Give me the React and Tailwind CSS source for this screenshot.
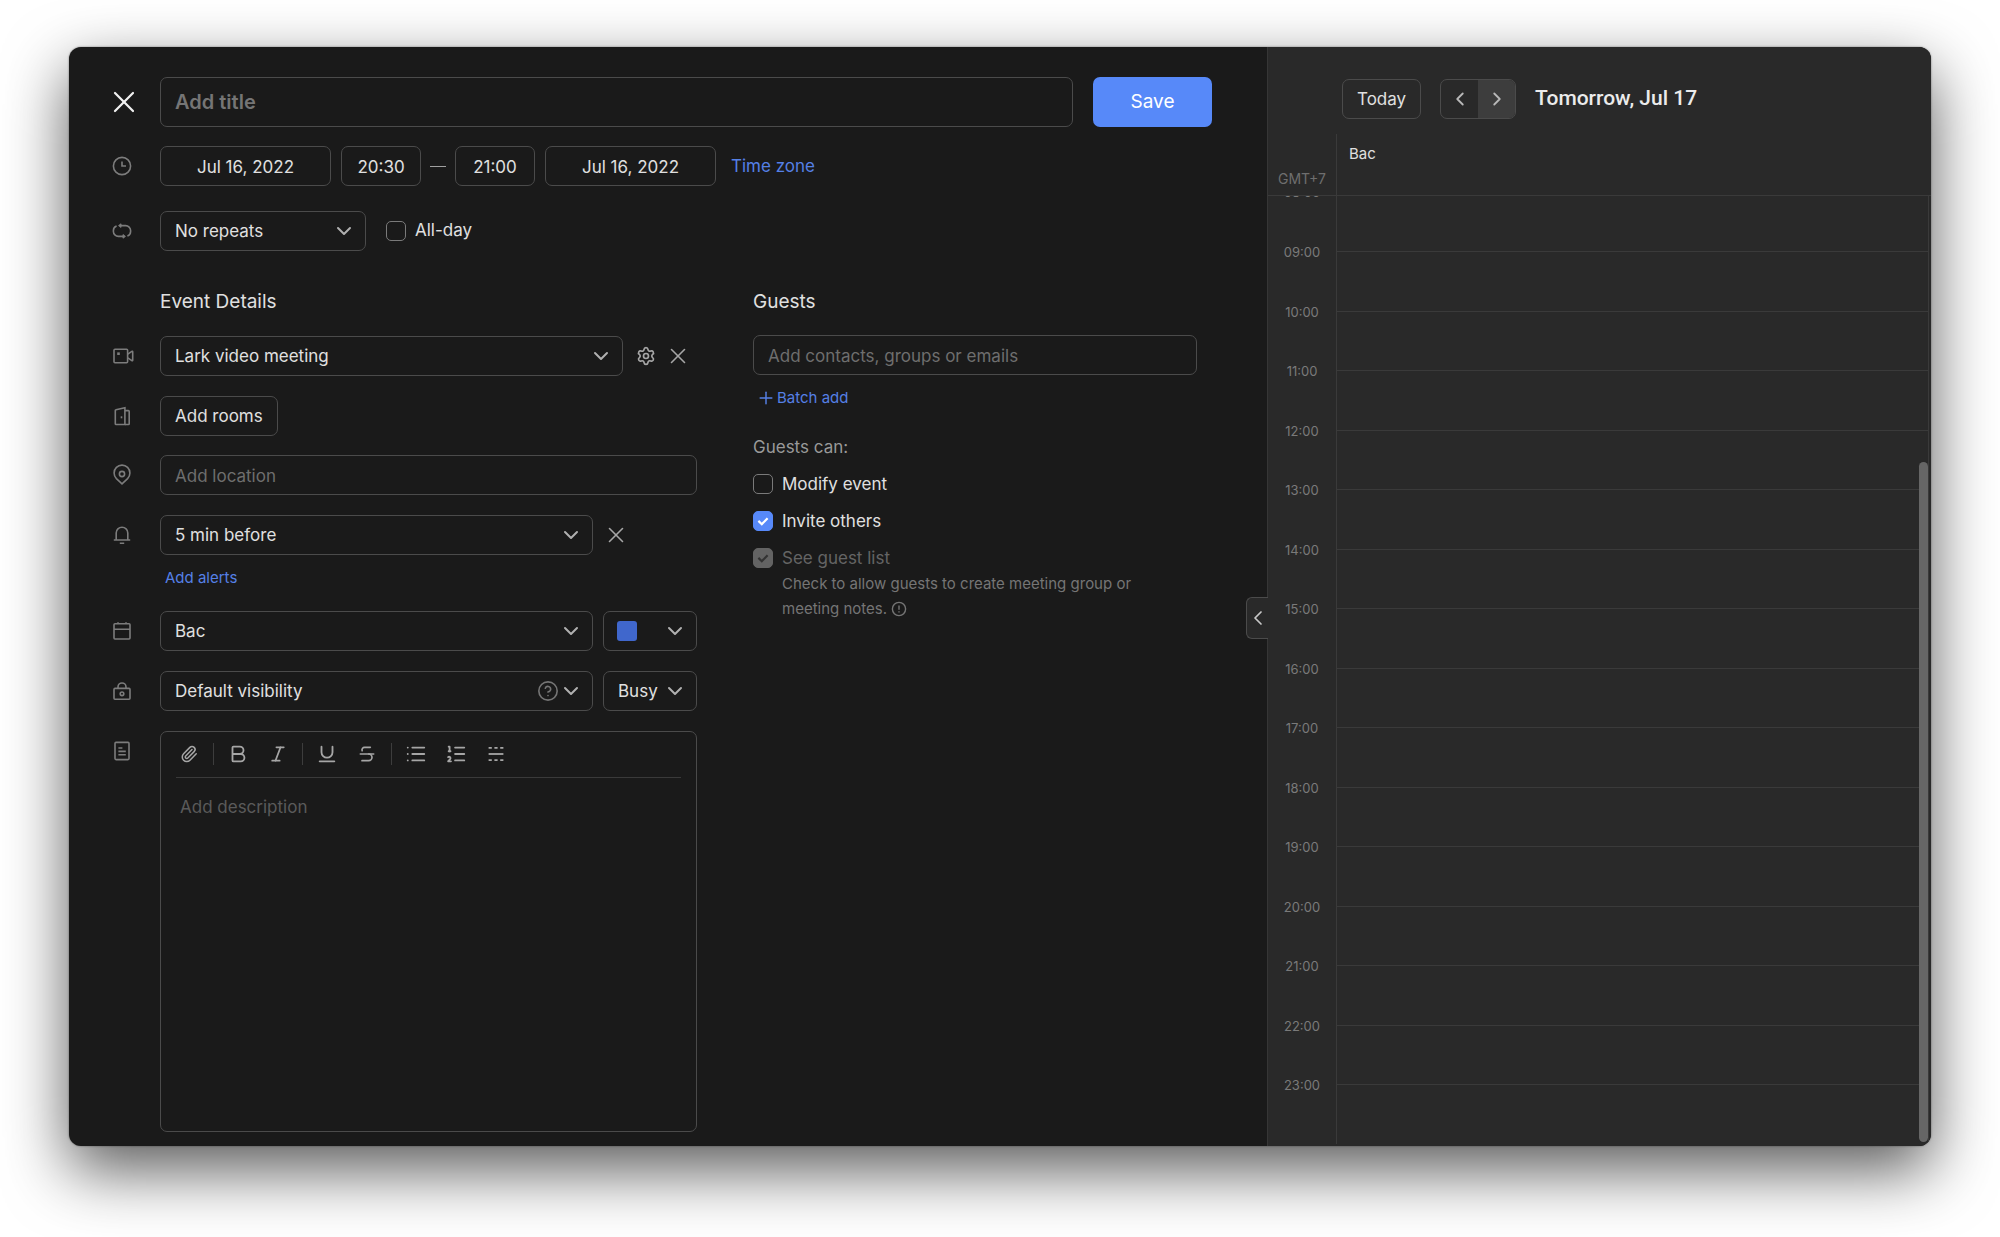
import { useState } from "react";
import {
  Bold,
  ChevronDown,
  ChevronLeft,
  ChevronRight,
  CircleQuestionMark,
  Italic,
  List,
  ListOrdered,
  Paperclip,
  Plus,
  Settings,
  Strikethrough,
  Underline,
  X,
} from "lucide-react";

const HOURS = [
  "09:00",
  "10:00",
  "11:00",
  "12:00",
  "13:00",
  "14:00",
  "15:00",
  "16:00",
  "17:00",
  "18:00",
  "19:00",
  "20:00",
  "21:00",
  "22:00",
  "23:00",
];

const FIELD =
  "h-10 rounded-[7px] border border-[#4b4b4b] bg-transparent pt-[2px] text-[17px] text-[#e0e0e0] placeholder-[#6e6e6e] outline-none focus:border-[#5789f9]";

const ICONS = {
  clock: (
    <>
      <circle cx="10" cy="10" r="8.6" />
      <path d="M10 5.6V10h4" />
    </>
  ),
  repeat: (
    <>
      <path d="M8 4.6h5.6a5 5 0 0 1 5 5v.8a4.8 4.8 0 0 1-3.2 4.6" />
      <path d="M12 15.4H6.4a5 5 0 0 1-5-5v-.8A4.8 4.8 0 0 1 4.6 5" />
      <path d="M9 2.8v3.6L6.6 4.6zM11 13.6v3.6l2.4-1.8z" fill="currentColor" strokeWidth="1" />
    </>
  ),
  video: (
    <>
      <rect x="2" y="3.2" width="13.6" height="13.6" rx="1" />
      <path d="M15.8 8.2l4-2.8c.5-.3.9-.1.9.4v8.4c0 .5-.4.7-.9.4l-4-2.8" />
      <rect x="5.2" y="6.4" width="2.6" height="2.6" fill="currentColor" stroke="none" />
    </>
  ),
  door: (
    <>
      <path d="M3.3 4.6c0-.5.2-.7.7-.8l8.9-2v16.7H4.1c-.5 0-.8-.3-.8-.8z" />
      <path d="M12.9 4.6h3.5c.5 0 .8.3.8.8v12.3c0 .5-.3.8-.8.8h-3.5" />
      <path d="M9.5 10.3v2" />
    </>
  ),
  pin: (
    <>
      <path d="M10 18.8l-5.6-5.2a7.9 7.9 0 1 1 11.2 0z" />
      <circle cx="10" cy="9" r="2.6" />
    </>
  ),
  bell: (
    <>
      <path d="M4.2 15V8a5.8 5.8 0 0 1 11.6 0v7" />
      <path d="M1.8 15h16.4M7.8 18.3h4.4" />
    </>
  ),
  calendar: (
    <>
      <rect x="2" y="2.8" width="16" height="15.2" rx="1" />
      <path d="M2 8.2h16M6 1.2v1.6M14 1.2v1.6" />
    </>
  ),
  lock: (
    <>
      <rect x="2" y="7.4" width="16" height="10.8" rx="1" />
      <path d="M6 7.2V6a4 4 0 0 1 8 0v1.2" />
      <circle cx="10" cy="12.8" r="1.8" />
    </>
  ),
  doc: (
    <>
      <rect x="3" y="1.4" width="14" height="17.2" rx="1" />
      <path d="M6.4 7h4M6.4 10.4h7.4M6.4 13.8h7.4" />
    </>
  ),
};

function RowIcon({ name }) {
  return (
    <span className="flex h-10 w-[91px] shrink-0 items-center pl-[43px] text-[#7c7c7c]">
      <svg
        viewBox="0 0 20 20"
        className="size-5 overflow-visible"
        fill="none"
        stroke="currentColor"
        strokeWidth="1.6"
        aria-hidden="true"
      >
        {ICONS[name]}
      </svg>
    </span>
  );
}

function Row({ icon, className = "", children }) {
  return (
    <div className={`flex items-start ${className}`}>
      <RowIcon name={icon} />
      {children}
    </div>
  );
}

function Select({ label, value, className = "", children }) {
  return (
    <div className={`relative ${className}`}>
      <select
        aria-label={label}
        defaultValue={value}
        className={`${FIELD} w-full appearance-none pl-[14px] pr-8`}
      >
        <option value={value}>{value}</option>
      </select>
      {children}
      <ChevronDown className="pointer-events-none absolute right-[10px] top-2 size-6 text-[#b0b0b0]" />
    </div>
  );
}

function Checkbox({ label, checked, disabled }) {
  const [on, setOn] = useState(Boolean(checked));

  return (
    <label className={`flex items-center gap-[9px] text-[17px] ${disabled ? "text-[#646464]" : "text-[#e0e0e0]"}`}>
      <span className="relative flex size-5">
        <input
          type="checkbox"
          checked={on}
          disabled={disabled}
          onChange={() => setOn(!on)}
          className="peer size-5 appearance-none rounded-[5px] border border-[#7a7a7a] checked:border-[#5789f9] checked:bg-[#5789f9] disabled:border-[#636363] disabled:bg-[#636363]"
        />
        <svg
          viewBox="0 0 20 20"
          className="pointer-events-none absolute inset-0 hidden size-5 text-white peer-checked:block peer-disabled:text-[#333333]"
          fill="none"
          stroke="currentColor"
          strokeWidth="2.2"
        >
          <path d="M5.4 9.9l3.4 3.3 5.8-6" />
        </svg>
      </span>
      {label}
    </label>
  );
}

function ToolButton({ label, children }) {
  return (
    <button type="button" aria-label={label} className="flex h-10 w-10 items-center justify-center">
      {children}
    </button>
  );
}

function Divider() {
  return <span className="mx-1 h-[22px] w-px bg-[#3d3d3d]" />;
}

function Description() {
  return (
    <div className="flex min-w-0 flex-1 flex-col self-stretch rounded-[7px] border border-[#4b4b4b]">
      <div className="flex h-[45px] items-center pb-px pl-2 text-[#a6a6a6]">
        <ToolButton label="Attach file"><Paperclip className="size-[18px]" strokeWidth={2} /></ToolButton>
        <Divider />
        <ToolButton label="Bold"><Bold className="size-[22px]" strokeWidth={2} /></ToolButton>
        <ToolButton label="Italic"><Italic className="size-5" strokeWidth={2} /></ToolButton>
        <Divider />
        <ToolButton label="Underline"><Underline className="size-[22px]" strokeWidth={2} /></ToolButton>
        <ToolButton label="Strikethrough"><Strikethrough className="size-5" strokeWidth={2} /></ToolButton>
        <Divider />
        <ToolButton label="Bulleted list"><List className="size-[22px]" strokeWidth={2} /></ToolButton>
        <ToolButton label="Numbered list"><ListOrdered className="size-[22px]" strokeWidth={2} /></ToolButton>
        <ToolButton label="Divider">
          <svg viewBox="0 0 20 20" className="size-5" fill="none" stroke="currentColor" strokeWidth="1.8">
            <path d="M2.6 10h14.8" />
            <path d="M2.6 3.8h3.2M8.4 3.8h3.2M14.2 3.8h3.2M2.6 16.2h3.2M8.4 16.2h3.2M14.2 16.2h3.2" />
          </svg>
        </ToolButton>
      </div>
      <div className="mx-[15px] h-px bg-[#3a3a3a]" />
      <textarea
        aria-label="Description"
        placeholder="Add description"
        className="min-h-24 w-full flex-1 resize-none bg-transparent px-[19px] pt-[15px] text-[17px] leading-7 text-[#e0e0e0] placeholder-[#5a5a5a] outline-none"
      />
    </div>
  );
}

function EventDetails() {
  return (
    <section className="flex min-w-0 flex-col">
      <h2 className="ml-[91px] text-[19px] leading-7 text-[#e0e0e0]">Event Details</h2>

      <Row icon="video" className="mt-5">
        <Select label="Meeting type" value="Lark video meeting" className="min-w-0 flex-1" />
        <div className="flex h-10 w-[74px] items-center gap-[9px] pl-[13px] text-[#a6a6a6]">
          <button type="button" aria-label="Meeting settings">
            <Settings className="size-5" strokeWidth={2} />
          </button>
          <button type="button" aria-label="Remove meeting">
            <X className="size-[26px]" strokeWidth={1.5} />
          </button>
        </div>
      </Row>

      <Row icon="door" className="mt-5">
        <button type="button" className={`${FIELD} px-[14px]`}>Add rooms</button>
      </Row>

      <Row icon="pin" className="mt-[19px]">
        <input
          type="text"
          aria-label="Location"
          placeholder="Add location"
          className={`${FIELD} min-w-0 flex-1 px-[14px]`}
        />
      </Row>

      <Row icon="bell" className="mt-5">
        <Select label="Alert" value="5 min before" className="min-w-0 flex-1" />
        <div className="flex h-10 w-[104px] items-center pl-[10px] text-[#a6a6a6]">
          <button type="button" aria-label="Remove alert">
            <X className="size-[26px]" strokeWidth={1.5} />
          </button>
        </div>
      </Row>

      <button type="button" className="ml-24 mt-[11px] self-start text-[15px] leading-6 text-[#5580e6]">
        Add alerts
      </button>

      <Row icon="calendar" className="mt-[21px]">
        <Select label="Calendar" value="Bac" className="min-w-0 flex-1" />
        <div className="relative ml-[10px] w-[94px]">
          <select aria-label="Event color" className={`${FIELD} w-full appearance-none`}>
            <option value="blue" aria-label="Blue" />
          </select>
          <span className="pointer-events-none absolute left-[14px] top-[10px] size-5 rounded-[3px] bg-[#4067cc]" />
          <ChevronDown className="pointer-events-none absolute right-[10px] top-2 size-6 text-[#b0b0b0]" />
        </div>
      </Row>

      <Row icon="lock" className="mt-5">
        <Select label="Visibility" value="Default visibility" className="min-w-0 flex-1">
          <CircleQuestionMark
            className="pointer-events-none absolute right-[34px] top-[9px] size-[22px] text-[#757575]"
            strokeWidth={1.75}
          />
        </Select>
        <Select label="Availability" value="Busy" className="ml-[10px] w-[94px]" />
      </Row>

      <Row icon="doc" className="mt-5 flex-1">
        <Description />
      </Row>
    </section>
  );
}

function Guests() {
  return (
    <section className="min-w-0">
      <h2 className="text-[19px] leading-7 text-[#e0e0e0]">Guests</h2>
      <input
        type="text"
        aria-label="Guests"
        placeholder="Add contacts, groups or emails"
        className={`${FIELD} mt-[19px] w-full px-[14px]`}
      />
      <button type="button" className="mt-[11px] flex items-center gap-px pl-[3px] text-[15px] leading-6 text-[#5580e6]">
        <Plus className="size-5" strokeWidth={1.75} />
        Batch add
      </button>

      <fieldset className="mt-[25px]">
        <legend className="text-[17px] leading-6 text-[#999999]">Guests can:</legend>
        <div className="mt-[13px] flex flex-col items-start gap-[13px] leading-6">
          <Checkbox label="Modify event" />
          <Checkbox label="Invite others" checked />
          <Checkbox label="See guest list" checked disabled />
        </div>
        <p className="ml-[29px] mt-px max-w-[360px] text-[15px] leading-[25px] text-[#757575]">
          Check to allow guests to create meeting group or meeting notes.{" "}
          <svg
            viewBox="0 0 16 16"
            className="inline size-4 align-[-3px]"
            fill="none"
            stroke="currentColor"
            strokeWidth="1.4"
            aria-hidden="true"
          >
            <circle cx="8" cy="8" r="6.6" />
            <path d="M8 4.4v4.4M8 10.2v1.4" />
          </svg>
        </p>
      </fieldset>
    </section>
  );
}

function EventForm() {
  return (
    <form className="flex min-w-0 flex-1 flex-col pb-[14px] pt-[30px]" onSubmit={(e) => e.preventDefault()}>
      <div className="flex items-center pr-[55px]">
        <div className="flex w-[91px] shrink-0 pl-[37px]">
          <button type="button" aria-label="Close" className="text-[#f0f0f0]">
            <X className="size-9" strokeWidth={1.5} />
          </button>
        </div>
        <input
          type="text"
          aria-label="Title"
          placeholder="Add title"
          className="h-[50px] min-w-0 flex-1 rounded-[7px] border border-[#4b4b4b] bg-transparent px-[14px] text-[20px] font-semibold text-[#e0e0e0] placeholder-[#757575] outline-none focus:border-[#5789f9]"
        />
        <button type="submit" className="ml-5 h-[50px] w-[119px] rounded-[7px] bg-[#5789f9] pt-px text-[19px] text-white">
          Save
        </button>
      </div>

      <Row icon="clock" className="mt-[19px]">
        <div className="flex items-center">
          <input type="text" aria-label="Start date" defaultValue="Jul 16, 2022" className={`${FIELD} w-[171px] text-center`} />
          <input type="text" aria-label="Start time" defaultValue="20:30" className={`${FIELD} ml-[10px] w-20 text-center`} />
          <span className="mx-[9px] h-px w-4 bg-[#a0a0a0]" />
          <input type="text" aria-label="End time" defaultValue="21:00" className={`${FIELD} w-20 text-center`} />
          <input type="text" aria-label="End date" defaultValue="Jul 16, 2022" className={`${FIELD} ml-[10px] w-[171px] text-center`} />
          <a href="#timezone" className="ml-[15px] pt-[2px] text-[17px] text-[#5580e6]">Time zone</a>
        </div>
      </Row>

      <Row icon="repeat" className="mt-[25px]">
        <div className="flex items-center gap-5">
          <Select label="Repeat" value="No repeats" className="w-[206px]" />
          <Checkbox label="All-day" />
        </div>
      </Row>

      <div className="mt-[37px] grid flex-1 grid-cols-[minmax(0,628fr)_minmax(0,444fr)] gap-14 pr-[70px]">
        <EventDetails />
        <Guests />
      </div>
    </form>
  );
}

function DaySchedule() {
  return (
    <aside className="relative flex w-[664px] shrink-0 flex-col border-l border-[#363636] bg-[#292929]">
      <button
        type="button"
        aria-label="Collapse schedule"
        className="absolute -left-[22px] top-[550px] flex h-[42px] w-[22px] items-center justify-center rounded-l-[6px] border border-r-0 border-[#4b4b4b] bg-[#292929] text-[#c8c8c8]"
      >
        <ChevronLeft className="size-6 shrink-0" strokeWidth={1.75} />
      </button>

      <header className="flex h-[87px] shrink-0 items-center pb-[3px] pl-[74px] pt-[20px]">
        <button type="button" className={`${FIELD} px-[14px]`}>Today</button>
        <div className="ml-[19px] flex h-10 w-[76px] overflow-hidden rounded-[7px] border border-[#4b4b4b] text-[#b8b8b8]">
          <button type="button" aria-label="Previous day" className="flex flex-1 items-center justify-center">
            <ChevronLeft className="size-[22px]" />
          </button>
          <button type="button" aria-label="Next day" className="flex flex-1 items-center justify-center bg-[#3d3d3d]">
            <ChevronRight className="size-[22px]" />
          </button>
        </div>
        <h2 className="ml-[19px] text-[21px] font-medium text-[#ebebeb] [font-family:Roboto,sans-serif]">
          Tomorrow, Jul 17
        </h2>
      </header>

      <div className="flex h-[62px] shrink-0 border-b border-[#3a3a3a]">
        <div className="flex w-[69px] items-end justify-center border-r border-[#3a3a3a] pb-2 text-[14px] leading-4 text-[#6e6e6e]">
          GMT+7
        </div>
        <div className="flex-1 pl-3 pt-2 text-[15px] leading-6 text-[#e0e0e0]">Bac</div>
      </div>

      <div className="relative grid flex-1 grid-rows-[55px_repeat(15,minmax(0,1fr))] overflow-hidden pb-[2px] pr-[2px] text-[13px] leading-4 text-[#7a7a7a]">
        {/* the 08:00 label is scrolled under the header */}
        <div className="flex overflow-hidden">
          <span className="w-[69px] border-r border-[#3a3a3a] text-center">
            <span className="-mt-3 block">08:00</span>
          </span>
          <span className="flex-1 border-r border-[#3a3a3a]" />
        </div>
        {HOURS.map((hour) => (
          <div key={hour} className="flex">
            <span className="w-[69px] border-r border-[#3a3a3a] text-center">
              <span className="-mt-[7px] block">{hour}</span>
            </span>
            <span className="flex-1 border-r border-t border-[#3a3a3a]" />
          </div>
        ))}
        <span className="absolute bottom-1 right-[3px] top-[266px] w-[9px] rounded-full bg-[#666666]" />
      </div>
    </aside>
  );
}

export default function App() {
  return (
    <div className="flex min-h-screen bg-white px-[69px] pb-[91px] pt-[47px] font-['Inter','Liberation_Sans',sans-serif]">
      <main className="flex flex-1 overflow-hidden rounded-xl bg-[#1a1a1a] shadow-[0_0_2px_rgba(0,0,0,0.5),0_24px_64px_rgba(0,0,0,0.65)]">
        <EventForm />
        <DaySchedule />
      </main>
    </div>
  );
}
